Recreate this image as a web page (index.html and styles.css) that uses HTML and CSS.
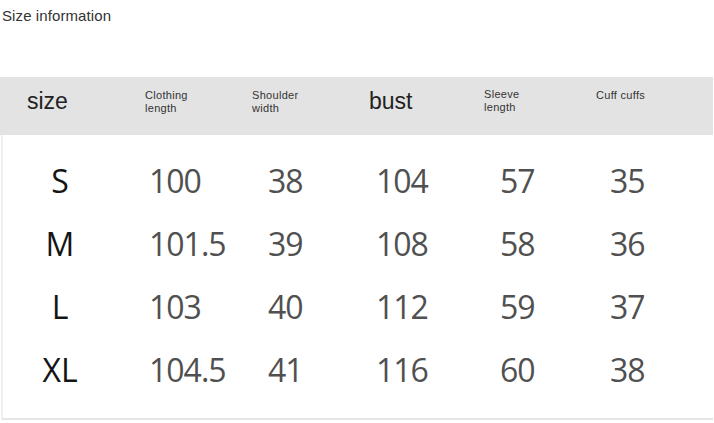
FILE: index.html
```html
<!DOCTYPE html>
<html>
<head>
<meta charset="utf-8">
<link rel="stylesheet" href="styles.css">
</head>
<body>
<div class="page">
  <div class="title">Size information</div>
  <div class="table">
    <div class="head row">
      <div class="big">size</div>
      <div class="small">Clothing<br>length</div>
      <div class="small">Shoulder<br>width</div>
      <div class="big">bust</div>
      <div class="small">Sleeve<br>length</div>
      <div class="small">Cuff cuffs</div>
    </div>
    <div class="body">
      <div class="row data"><div>S</div><div>100</div><div>38</div><div>104</div><div>57</div><div>35</div></div>
      <div class="row data"><div>M</div><div>101.5</div><div>39</div><div>108</div><div>58</div><div>36</div></div>
      <div class="row data"><div>L</div><div>103</div><div>40</div><div>112</div><div>59</div><div>37</div></div>
      <div class="row data"><div>XL</div><div>104.5</div><div>41</div><div>116</div><div>60</div><div>38</div></div>
    </div>
  </div>
</div>
</body>
</html>
```
FILE: styles.css
```css
html, body {
  margin: 0;
  padding: 0;
  background: #ffffff;
}
.page {
  width: 714px;
  height: 423px;
  overflow: hidden;
}
.title {
  font-family: "Liberation Sans", Arial, sans-serif;
  font-size: 15px;
  color: #333333;
  padding: 7px 0 0 2px;
  height: 70px;
  box-sizing: border-box;
  letter-spacing: 0.1px;
}
.table {
  width: 713px;
}
.row {
  display: grid;
  grid-template-columns: 120px 132px 116px 116px 112px 117px;
}
.head {
  background: #e3e3e3;
  height: 58px;
  box-sizing: border-box;
  padding-top: 12px;
  margin-top: 7px;
  align-items: start;
  font-family: "Liberation Sans", Arial, sans-serif;
  color: #222222;
}
.head .big {
  font-size: 23px;
  line-height: 26px;
  margin-top: -1px;
}
.head .small {
  font-size: 11px;
  line-height: 13px;
  letter-spacing: 0.3px;
  color: #333333;
}
.head > :nth-child(1) { padding-left: 27px; }
.head > :nth-child(2) { padding-left: 25px; }
.head > :nth-child(3) { padding-left: 0; }
.head > :nth-child(4) { padding-left: 1px; }
.head > :nth-child(5) { padding-left: 0; margin-top: -1px; }
.head > :nth-child(6) { padding-left: 0; }

.body {
  padding: 14px 0 17px 0;
  border-left: 2px solid #f0f0f0;
  border-bottom: 2px solid #e6e6e6;
  margin-left: 1px;
}
.data {
  font-family: "Open Sans", "Noto Sans", sans-serif;
  font-size: 32px;
  line-height: 63px;
  letter-spacing: -1px;
  color: #505050;
  margin-left: -3px;
}
.data > :nth-child(1) { text-align: center; color: #151515; letter-spacing: 0; }
.data > :nth-child(2) { padding-left: 29px; }
.data > :nth-child(3) { padding-left: 16px; }
.data > :nth-child(4) { padding-left: 8px; }
.data > :nth-child(5) { padding-left: 16px; }
.data > :nth-child(6) { padding-left: 14px; }
```
